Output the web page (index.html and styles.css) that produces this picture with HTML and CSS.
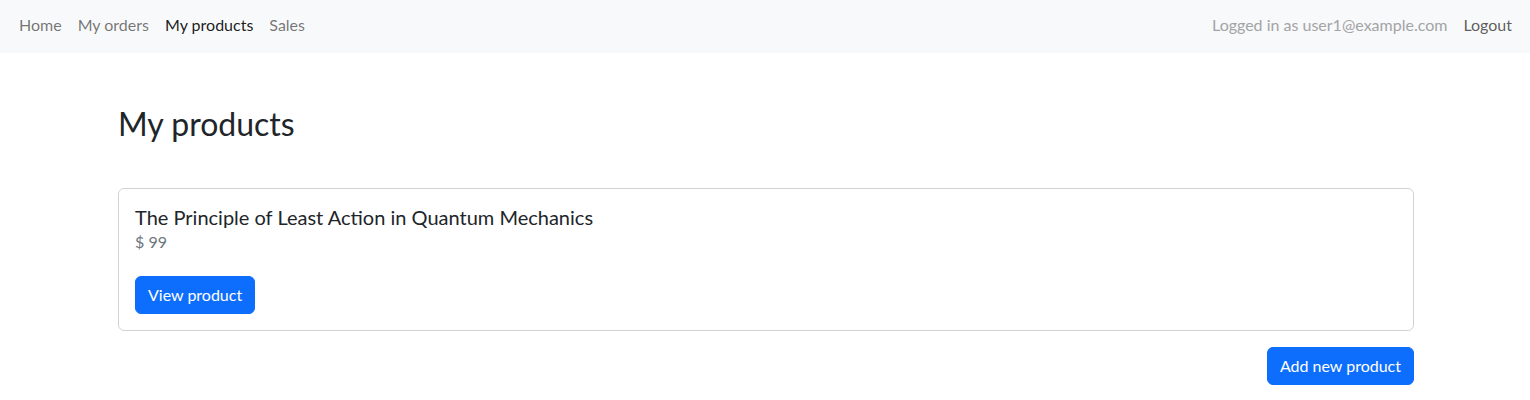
FILE: index.html
```html
<!DOCTYPE html>
<html lang="en">
<head>
    <meta charset="UTF-8">
    <meta name="viewport" content="width=device-width, initial-scale=1.0">
    <title>My products</title>
    <link rel="stylesheet" href="styles.css">
</head>
<body>
    <nav class="navbar">
        <ul class="nav-links">
            <li><a href="#">Home</a></li>
            <li><a href="#">My orders</a></li>
            <li><a href="#" class="active">My products</a></li>
            <li><a href="#">Sales</a></li>
        </ul>
        <div class="nav-user">
            <span class="user-text">Logged in as user1@example.com</span>
            <a href="#" class="logout">Logout</a>
        </div>
    </nav>

    <main class="container">
        <h1>My products</h1>

        <div class="card">
            <h5 class="card-title">The Principle of Least Action in Quantum Mechanics</h5>
            <p class="price">$ 99</p>
            <a href="#" class="btn">View product</a>
        </div>

        <div class="actions">
            <a href="#" class="btn">Add new product</a>
        </div>
    </main>
</body>
</html>
```

FILE: styles.css
```css
body {
    margin: 0;
    font-family: Lato, "Noto Sans", sans-serif;
    font-size: 16px;
    line-height: 1.5;
    color: #212529;
    background: #ffffff;
}

a {
    text-decoration: none;
}

.navbar {
    display: flex;
    justify-content: space-between;
    align-items: center;
    height: 53px;
    padding: 0 10px 3px 11px;
    box-sizing: border-box;
    background-color: #f8f9fa;
}

.nav-links {
    display: flex;
    list-style: none;
    margin: 0;
    padding: 0;
}

.nav-links a {
    display: block;
    padding: 8px;
    color: rgba(0, 0, 0, 0.55);
}

.nav-links a.active {
    color: rgba(0, 0, 0, 0.9);
}

.nav-user {
    display: flex;
    align-items: center;
}

.user-text {
    color: #a3a4a6;
    padding: 8px;
}

.logout {
    color: rgba(0, 0, 0, 0.65);
    padding: 8px;
}

.container {
    max-width: 1296px;
    margin: 0 auto;
    padding: 52px 11px 0 13px;
}

h1 {
    margin: 0 0 45px;
    font-size: 32px;
    font-weight: 400;
    line-height: 1.2;
}

.card {
    border: 1px solid rgba(0, 0, 0, 0.175);
    border-radius: 6px;
    padding: 16px;
}

.card-title {
    margin: 0 0 1px;
    font-size: 20px;
    font-weight: 400;
    line-height: 1.2;
}

.price {
    margin: 0 0 22px;
    color: #6c757d;
}

.btn {
    display: inline-block;
    padding: 6px 12px;
    background: #0d6efd;
    color: #ffffff;
    border-radius: 6px;
    border: 1px solid #0d6efd;
}

.actions {
    display: flex;
    justify-content: flex-end;
    margin-top: 16px;
}
```
